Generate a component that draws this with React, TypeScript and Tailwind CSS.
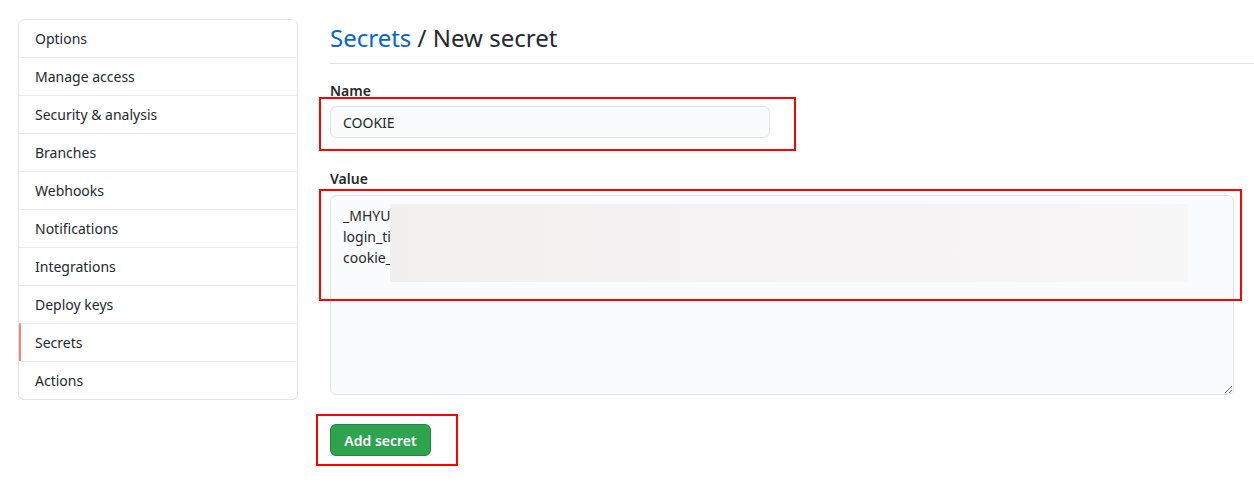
const navItems = [
  "Options",
  "Manage access",
  "Security & analysis",
  "Branches",
  "Webhooks",
  "Notifications",
  "Integrations",
  "Deploy keys",
  "Secrets",
  "Actions",
];

export default function App() {
  return (
    <div
      className="relative min-h-[483px] w-[1254px] overflow-hidden bg-white text-[14px] text-[#24292e]"
      style={{ fontFamily: '"Noto Sans", "Liberation Sans", sans-serif' }}
    >
      <div className="flex gap-[32px] pl-[18px] pt-[19px]">
        {/* Sidebar menu */}
        <nav className="w-[280px] shrink-0 self-start overflow-hidden rounded-[6px] border border-t-0 border-[#e1e4e8]">
          {navItems.map((item, i) => (
            <div
              key={item}
              className={`flex h-[38px] items-center border-t ${
                i === 0 ? "rounded-t-[6px] border-[#e1e4e8]" : "border-[#eaecef]"
              } ${item === "Secrets" ? "border-l-2 border-l-[#f9826c] pl-[14px]" : "pl-[16px]"}`}
            >
              {item}
            </div>
          ))}
        </nav>

        {/* Main form */}
        <main className="flex-1">
          <div className="mb-[16px] flex h-[45px] items-start border-b border-[#e1e4e8]">
            <h2 className="mt-[1px] text-[24px] leading-[36px] font-normal">
              <span className="text-[#0366d6]">Secrets</span> / New secret
            </h2>
          </div>

          <label className="block text-[14px] leading-[21px] font-semibold">Name</label>
          <div className="mt-[5px] flex h-[32px] w-[440px] items-center rounded-[6px] border border-[#e1e4e8] bg-[#fafbfc] px-[12px]">
            COOKIE
          </div>

          <label className="mt-[30px] block text-[14px] leading-[21px] font-semibold">Value</label>
          <div className="relative mt-[6px] w-[904px]">
            <textarea
              readOnly
              value={"_MHYU\nlogin_ti\ncookie_"}
              className="block h-[200px] w-full resize-y rounded-[6px] border border-[#e1e4e8] bg-[#fafbfc] px-[12px] pt-[9px] text-[14px] leading-[21px] text-[#24292e] outline-none"
              style={{ fontFamily: '"Noto Sans", "Liberation Sans", sans-serif' }}
            />
            {/* blurred redaction */}
            <div className="absolute top-[9px] left-[60px] h-[78px] w-[798px] bg-[linear-gradient(90deg,#f2efef_0%,#f4f2f2_40%,#f6f4f4_80%,#f8f7f7_100%)]" />
          </div>

          <button className="mt-[29px] flex h-[32px] w-[101px] items-center justify-center rounded-[6px] border border-[#22863a] bg-[#2ea44f] text-[14px] font-semibold text-white">
            Add secret
          </button>
        </main>
      </div>

      {/* red annotation boxes */}
      <div className="pointer-events-none absolute top-[97px] left-[319px] h-[54px] w-[477px] border-2 border-[#ff0000]" />
      <div className="pointer-events-none absolute top-[189px] left-[319px] h-[112px] w-[923px] border-2 border-[#ff0000]" />
      <div className="pointer-events-none absolute top-[414px] left-[316px] h-[52px] w-[142px] border-2 border-[#ff0000]" />
    </div>
  );
}
